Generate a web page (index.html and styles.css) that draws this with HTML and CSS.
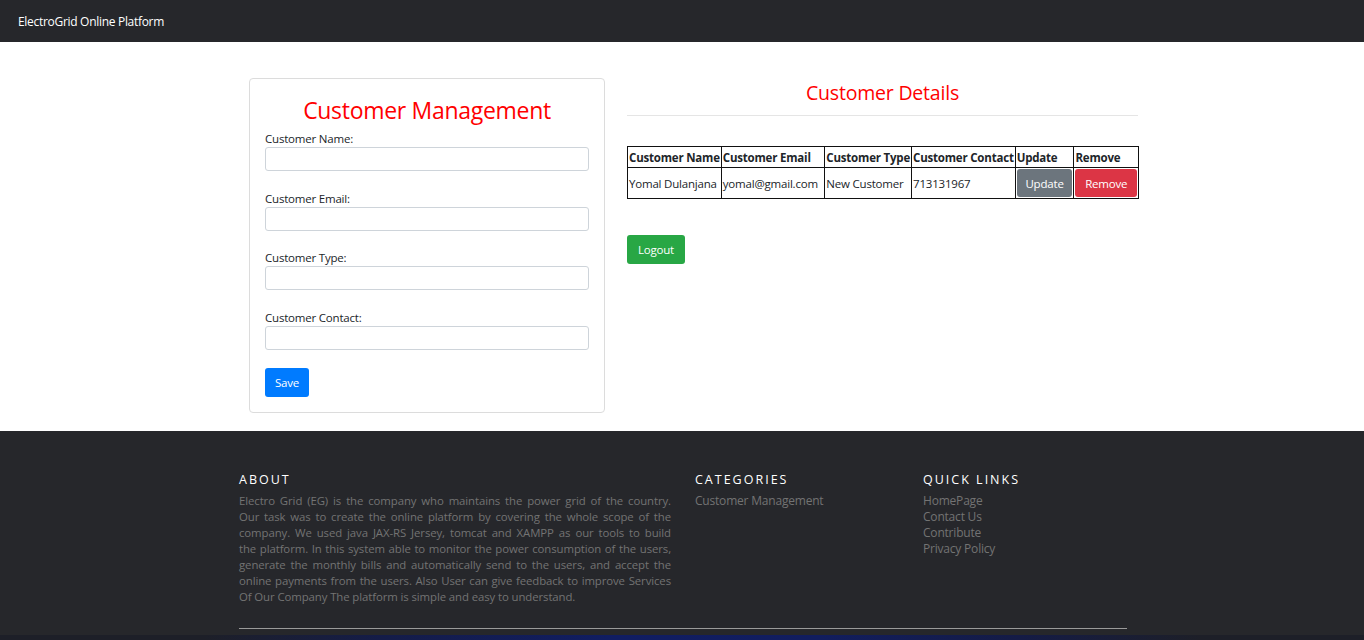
FILE: index.html
```html
<!DOCTYPE html>
<html>
<head>
<meta charset="utf-8">
<title>ElectroGrid Online Platform</title>
<link rel="stylesheet" href="styles.css">
</head>
<body>
<nav class="topbar"><span class="brand">ElectroGrid Online Platform</span></nav>
<main class="page">
  <section class="card">
    <h1 class="card-title">Customer Management</h1>
    <form class="form">
      <div class="field">
        <label class="label">Customer Name:</label>
        <input class="input" type="text">
      </div>
      <div class="field">
        <label class="label">Customer Email:</label>
        <input class="input" type="text">
      </div>
      <div class="field">
        <label class="label">Customer Type:</label>
        <input class="input" type="text">
      </div>
      <div class="field">
        <label class="label">Customer Contact:</label>
        <input class="input" type="text">
      </div>
      <button type="button" class="btn btn-primary">Save</button>
    </form>
  </section>
  <section class="details">
    <h2 class="details-title">Customer Details</h2>
    <hr class="rule">
    <table class="grid">
      <thead>
        <tr>
          <th class="c1">Customer Name</th>
          <th class="c2">Customer Email</th>
          <th class="c3">Customer Type</th>
          <th class="c4">Customer Contact</th>
          <th class="c5">Update</th>
          <th class="c6">Remove</th>
        </tr>
      </thead>
      <tbody>
        <tr>
          <td>Yomal Dulanjana</td>
          <td>yomal@gmail.com</td>
          <td>New Customer</td>
          <td>713131967</td>
          <td class="cell-btn"><button type="button" class="btn btn-secondary btn-fill">Update</button></td>
          <td class="cell-btn"><button type="button" class="btn btn-danger btn-fill">Remove</button></td>
        </tr>
      </tbody>
    </table>
    <button type="button" class="btn btn-success logout">Logout</button>
  </section>
</main>
<footer class="footer">
  <div class="footer-inner">
    <div class="fcols">
      <div class="fcol">
        <h6 class="fhead">ABOUT</h6>
        <p class="about">
          <span class="ln">Electro Grid (EG) is the company who maintains the power grid of the country.</span>
          <span class="ln">Our task was to create the online platform by covering the whole scope of the</span>
          <span class="ln">company. We used java JAX-RS Jersey, tomcat and XAMPP as our tools to build</span>
          <span class="ln">the platform. In this system able to monitor the power consumption of the users,</span>
          <span class="ln">generate the monthly bills and automatically send to the users, and accept the</span>
          <span class="ln">online payments from the users. Also User can give feedback to improve Services</span>
          <span class="ln last">Of Our Company The platform is simple and easy to understand.</span>
        </p>
      </div>
      <div class="fcol">
        <h6 class="fhead">CATEGORIES</h6>
        <ul class="links">
          <li>Customer Management</li>
        </ul>
      </div>
      <div class="fcol">
        <h6 class="fhead">QUICK LINKS</h6>
        <ul class="links">
          <li>HomePage</li>
          <li>Contact Us</li>
          <li>Contribute</li>
          <li>Privacy Policy</li>
        </ul>
      </div>
    </div>
    <hr class="frule">
  </div>
  <div class="fstrip"></div>
</footer>
</body>
</html>
```
FILE: styles.css
```css
* { box-sizing: border-box; }
html, body { margin: 0; padding: 0; }
body {
  font-family: "Open Sans", "Noto Sans", sans-serif;
  color: #212529;
  background: #fff;
  font-size: 12px;
}
.topbar {
  height: 42px;
  background: #26272b;
  display: flex;
  align-items: center;
  padding-left: 18px;
}
.brand { color: #fff; font-size: 12px; letter-spacing: -0.3px; }

.page {
  display: flex;
  align-items: flex-start;
  gap: 22px;
  padding: 36px 0 18px 249px;
}
.card {
  width: 356px;
  border: 1px solid #dcdcdc;
  border-radius: 4px;
  padding: 14px 15px 15px;
}
.card-title {
  margin: 0 0 4px;
  text-align: center;
  color: #ff0000;
  font-weight: 400;
  font-size: 23px;
  line-height: 34px;
  letter-spacing: -0.3px;
}
.form { display: flex; flex-direction: column; }
.field { display: flex; flex-direction: column; margin-bottom: 19.6px; }
.label { font-size: 11.5px; line-height: 16px; letter-spacing: -0.2px; }
.input {
  height: 24px;
  border: 1px solid #ced4da;
  border-radius: 3px;
  font: inherit;
  padding: 2px 6px;
}
.field:last-of-type { margin-bottom: 18px; }

.btn {
  font-family: inherit;
  font-size: 11.5px;
  color: #fff;
  border: 1px solid transparent;
  border-radius: 3px;
  padding: 0 9px;
  height: 29px;
  cursor: pointer;
  letter-spacing: -0.2px;
}
.btn-primary { background: #007bff; align-self: flex-start; width: 44px; height: 29px; padding: 0; }
.btn-secondary { background: #6c757d; }
.btn-danger { background: #dc3545; }
.btn-success { background: #28a745; }

.details { width: 511px; }
.details-title {
  margin: 0;
  text-align: center;
  color: #ff0000;
  font-weight: 400;
  font-size: 19.5px;
  line-height: 28px;
  padding-top: 1px;
  letter-spacing: -0.2px;
}
.rule {
  border: 0;
  border-top: 1px solid #e5e5e5;
  margin: 8px 0 30px;
}
.grid {
  width: 512px;
  border-collapse: collapse;
  font-size: 11.5px;
  letter-spacing: -0.2px;
}
.grid th, .grid td {
  border: 1px solid #111;
  padding: 0 1px;
  text-align: left;
  white-space: nowrap;
}
.grid th { height: 21px; font-weight: 700; }
.grid td { height: 30px; }
.c1 { width: 93px; }
.c2 { width: 104px; }
.c3 { width: 85px; }
.c4 { width: 103px; }
.c5 { width: 60px; }
.c6 { width: 66px; }
.grid td.cell-btn { padding: 1px; }
.btn-fill { width: 100%; height: 28px; display: block; padding: 0; }
.logout { margin-top: 36px; width: 58px; padding: 0; }

.footer { background: #26272b; padding-top: 41px; }
.footer-inner { width: 888px; margin-left: 239px; }
.fcols {
  display: grid;
  grid-template-columns: 432px 204px 204px;
  column-gap: 24px;
}
.fhead {
  margin: 0 0 5px;
  color: #fff;
  font-size: 12.5px;
  font-weight: 400;
  letter-spacing: 2px;
  line-height: 16px;
}
.about {
  margin: 0;
  color: #737373;
  font-size: 11.4px;
  line-height: 16px;
  letter-spacing: -0.1px;
}
.ln { display: block; text-align: justify; text-align-last: justify; }
.ln.last { text-align-last: left; }
.links { margin: 0; padding: 0; list-style: none; color: #737373; font-size: 12px; line-height: 16px; letter-spacing: -0.2px; }
.frule { border: 0; border-top: 1px solid #9a9a9a; margin: 23px 0 6px; }
.fstrip {
  height: 8px;
  background: linear-gradient(90deg, #1d1f28 0%, #1d1f28 15%, #141c48 28%, #101d62 45%, #111d5e 60%, #141b45 75%, #1d1f28 88%, #1d1f28 100%);
}
```
